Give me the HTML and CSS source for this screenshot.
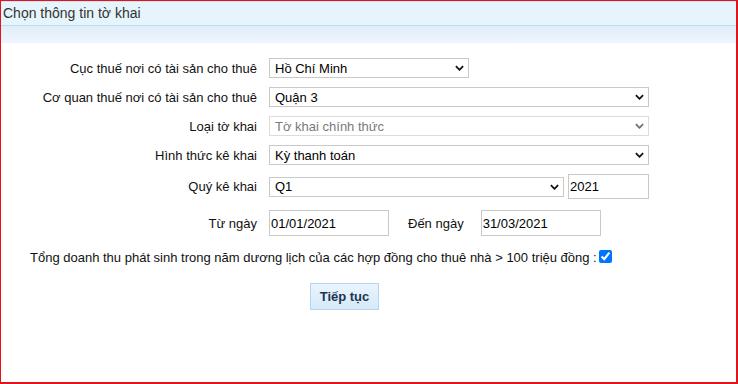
FILE: index.html
```html
<!DOCTYPE html>
<html lang="vi">
<head>
  <meta charset="UTF-8" />
  <title>Chọn thông tin tờ khai</title>
  <link rel="stylesheet" href="styles.css">
</head>
<body>

  <div class="frame">
    <div class="panel-head">
      <div class="panel-title">Chọn thông tin tờ khai</div>
      <div class="panel-strip"></div>
    </div>

    <div class="form">
      <div class="row">
        <label class="lbl">Cục thuế nơi có tài sản cho thuê</label>
        <div class="sel w-short">
          <select><option>Hồ Chí Minh</option></select>
          <svg class="chev" viewBox="0 0 10 6"><path d="M1 1l4 4 4-4" /></svg>
        </div>
      </div>

      <div class="row">
        <label class="lbl">Cơ quan thuế nơi có tài sản cho thuê</label>
        <div class="sel w-long">
          <select><option>Quận 3</option></select>
          <svg class="chev" viewBox="0 0 10 6"><path d="M1 1l4 4 4-4" /></svg>
        </div>
      </div>

      <div class="row">
        <label class="lbl">Loại tờ khai</label>
        <div class="sel w-long disabled">
          <select disabled><option>Tờ khai chính thức</option></select>
          <svg class="chev" viewBox="0 0 10 6"><path d="M1 1l4 4 4-4" /></svg>
        </div>
      </div>

      <div class="row">
        <label class="lbl">Hình thức kê khai</label>
        <div class="sel w-long">
          <select><option>Kỳ thanh toán</option></select>
          <svg class="chev" viewBox="0 0 10 6"><path d="M1 1l4 4 4-4" /></svg>
        </div>
      </div>

      <div class="row row-tall">
        <label class="lbl">Quý kê khai</label>
        <div class="sel w-mid">
          <select><option>Q1</option></select>
          <svg class="chev" viewBox="0 0 10 6"><path d="M1 1l4 4 4-4" /></svg>
        </div>
        <input class="txt w-year" type="text" value="2021" />
      </div>

      <div class="row row-dates">
        <label class="lbl">Từ ngày</label>
        <input class="txt w-date" type="text" value="01/01/2021" />
        <label class="lbl-inline">Đến ngày</label>
        <input class="txt w-date" type="text" value="31/03/2021" />
      </div>

      <div class="row row-check">
        <span>Tổng doanh thu phát sinh trong năm dương lịch của các hợp đồng cho thuê nhà &gt; 100 triệu đồng :</span>
        <input class="chk" type="checkbox" checked />
      </div>

      <div class="actions">
        <button class="btn" type="button">Tiếp tục</button>
      </div>
    </div>
  </div>

</body>
</html>
```

FILE: styles.css
```css
html, body {
  margin: 0;
  padding: 0;
  background: #fff;
}

body {
  font-family: "Liberation Sans", Arial, sans-serif;
  font-size: 13px;
  color: #222;
}

.frame {
  width: 738px;
  height: 384px;
  box-sizing: border-box;
  border-style: solid;
  border-color: #e0141a;
  border-width: 1px 2px 2px 1px;
  overflow: hidden;
}

/* header bar */
.panel-head {
  border-top: 1px solid #cfe5f6;
}

.panel-title {
  height: 23px;
  line-height: 23px;
  padding-left: 2px;
  background: #e6f4fc;
  border-bottom: 1px solid #bfdaf1;
  color: #333;
  font-size: 14px;
}

.panel-strip {
  height: 17px;
  background: linear-gradient(#e0eefb, #eef5fd);
}

/* form */
.form {
  display: flex;
  flex-direction: column;
  gap: 9px;
  padding-top: 15px;
}

.row {
  display: flex;
  align-items: center;
  height: 20px;
}

.row-tall {
  height: 25px;
}

.row-dates {
  height: 26px;
  margin-top: 2px;
}

.row-check {
  height: 18px;
  margin-top: 3px;
  padding-left: 29px;
  color: #111;
}

.lbl {
  width: 256px;
  margin-right: 12px;
  text-align: right;
  color: #111;
}

.lbl-inline {
  margin: 0 17px 0 19px;
  color: #111;
}

.sel {
  position: relative;
  height: 20px;
}

.sel select {
  appearance: none;
  -webkit-appearance: none;
  width: 100%;
  height: 100%;
  box-sizing: border-box;
  border: 1px solid #c9c9c9;
  border-radius: 0;
  background: #fff;
  padding: 0 20px 0 5px;
  margin: 0;
  font-family: inherit;
  font-size: 13px;
  color: #000;
}

.sel.disabled select {
  color: #7a7a7a;
  border-color: #dcdcdc;
  opacity: 1;
}

.chev {
  position: absolute;
  right: 5px;
  top: 7px;
  width: 9px;
  height: 6px;
  pointer-events: none;
}

.chev path {
  fill: none;
  stroke: #111;
  stroke-width: 2;
}

.sel.disabled .chev path {
  stroke: #6f6f6f;
}

.w-short { width: 200px; }
.w-long { width: 380px; }
.w-mid { width: 295px; }

.txt {
  height: 25px;
  box-sizing: border-box;
  border: 1px solid #c9c9c9;
  padding: 0 1px;
  margin: 0;
  font-family: inherit;
  font-size: 13px;
  color: #000;
  outline: none;
}

.w-year {
  width: 81px;
  margin-left: 4px;
}

.w-date {
  width: 120px;
  height: 26px;
}

.chk {
  width: 13px;
  height: 13px;
  margin: 0 0 2px 2px;
  accent-color: #0075ff;
}

.actions {
  margin-top: 8px;
  padding-left: 309px;
}

.btn {
  width: 69px;
  height: 27px;
  border: 1px solid #b6d5f0;
  background: linear-gradient(#eaf4fd, #d6e9f9);
  color: #1d3550;
  font-family: inherit;
  font-size: 13px;
  font-weight: bold;
  padding: 0;
  cursor: pointer;
}
```
